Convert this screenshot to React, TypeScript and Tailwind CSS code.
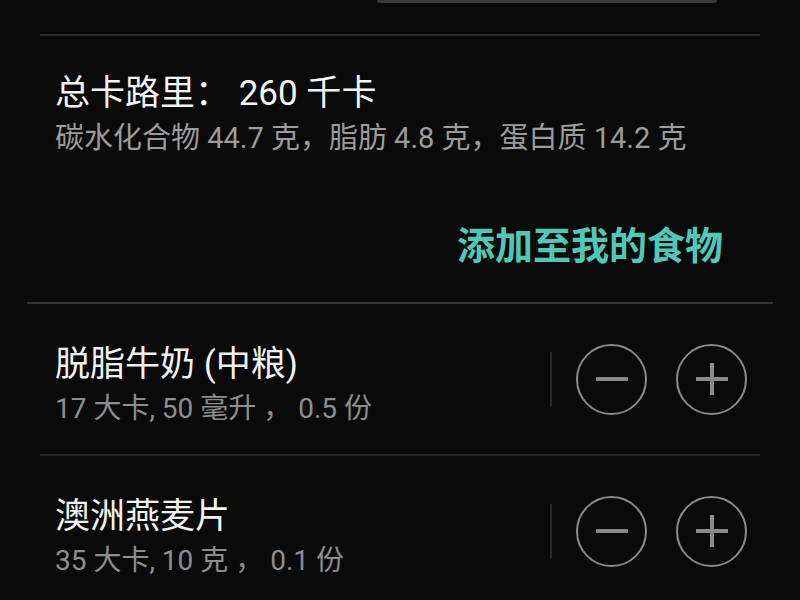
import React from "react";

const font = { fontFamily: "Roboto, 'Noto Sans CJK SC', sans-serif" };

function CircleBtn({ plus }: { plus?: boolean }) {
  return (
    <div className="w-[71px] h-[71px] rounded-full border-2 border-[#8a8a8a] flex items-center justify-center shrink-0">
      <svg width="34" height="34" viewBox="0 0 34 34">
        <rect x="1" y="15" width="32" height="4" fill="#8a8a8a" />
        {plus && <rect x="15" y="1" width="4" height="32" fill="#8a8a8a" />}
      </svg>
    </div>
  );
}

function Row({ name, sub }: { name: string; sub: string }) {
  return (
    <div className="h-[150px] flex items-center pl-[55px] pr-[53px]">
      <div className="flex-1 pt-[16px]">
        <div className="text-[35px] leading-[44px] text-[#f2f2f2]">{name}</div>
        <div className="text-[28px] leading-[44px] text-[#8e8e8e]">{sub}</div>
      </div>
      <div className="w-[2px] h-[54px] bg-[#2c2c2c] mr-[24px]" />
      <div className="flex gap-[29px]">
        <CircleBtn />
        <CircleBtn plus />
      </div>
    </div>
  );
}

export default function App() {
  return (
    <div className="w-[800px] h-[600px] overflow-hidden bg-[#0a0a0a]" style={font}>
      <div className="pl-[377px]">
        <div className="w-[340px] h-[3px] rounded-b-full bg-[#3a3a3a]" />
      </div>
      <div className="mt-[31px] mx-[40px] h-[2px] bg-[#2b2b2b]" />
      <div className="pt-[36px] pl-[55px]">
        <div className="text-[35px] leading-[44px] text-[#f4f4f4]">总卡路里： 260 千卡</div>
        <div className="text-[29px] leading-[44px] text-[#9c9c9c]">碳水化合物 44.7 克，脂肪 4.8 克，蛋白质 14.2 克</div>
      </div>
      <div className="mt-[61px] flex justify-end pr-[77px]">
        <div className="text-[38px] leading-[50px] font-bold text-[#52c7b8]">添加至我的食物</div>
      </div>
      <div className="mt-[31px] mx-[27px] h-[2px] bg-[#333333]" />
      <Row name="脱脂牛奶 (中粮)" sub="17 大卡, 50 毫升 ， 0.5 份" />
      <div className="mx-[40px] h-[2px] bg-[#262626]" />
      <Row name="澳洲燕麦片" sub="35 大卡, 10 克 ， 0.1 份" />
    </div>
  );
}
